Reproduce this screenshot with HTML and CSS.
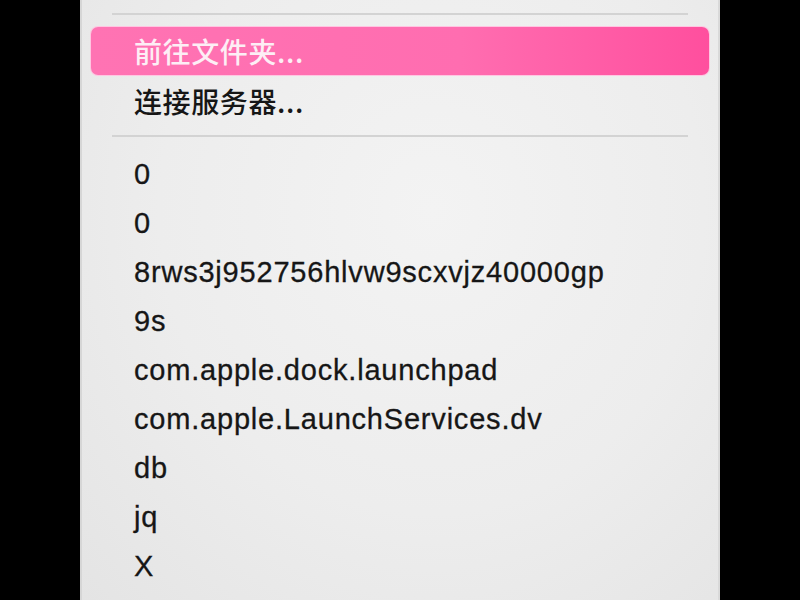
FILE: index.html
```html
<!DOCTYPE html>
<html lang="zh-CN">
<head>
<meta charset="utf-8">
<title>Menu</title>
<link rel="stylesheet" href="styles.css">
</head>
<body>
<div class="screen">
  <div class="menu">
    <div class="sep sep-top"></div>
    <div class="item item-cjk active">前往文件夹...</div>
    <div class="item item-cjk item-second">连接服务器...</div>
    <div class="sep sep-mid"></div>
    <div class="item">0</div>
    <div class="item">0</div>
    <div class="item">8rws3j952756hlvw9scxvjz40000gp</div>
    <div class="item">9s</div>
    <div class="item">com.apple.dock.launchpad</div>
    <div class="item">com.apple.LaunchServices.dv</div>
    <div class="item">db</div>
    <div class="item">jq</div>
    <div class="item">X</div>
  </div>
</div>
</body>
</html>
```

FILE: styles.css
```css
html, body {
  margin: 0;
  padding: 0;
  background: #000;
  width: 800px;
  height: 600px;
  overflow: hidden;
}

.screen {
  display: flex;
  justify-content: center;
  width: 800px;
  height: 600px;
}

.menu {
  width: 636px;
  height: 600px;
  overflow: hidden;
  background: radial-gradient(ellipse at 55% 35%, #f3f3f3 0%, #ededed 55%, #e4e4e4 100%);
  border-left: 2px solid #d6d6d6;
  border-right: 2px solid #d9d9d9;
  display: flex;
  flex-direction: column;
  font-family: "Liberation Sans", Arial, "Noto Sans CJK SC", sans-serif;
  color: #161616;
}

.sep {
  flex: none;
  height: 0;
  border-top: 2px solid #d3d3d3;
  margin-left: 30px;
  margin-right: 30px;
}

.sep-top {
  margin-top: 13px;
  margin-bottom: 12px;
}

.sep-mid {
  margin-top: 8px;
  margin-bottom: 13px;
}

.item {
  flex: none;
  height: 49px;
  line-height: 49px;
  padding-left: 52px;
  font-size: 29px;
  letter-spacing: 0.8px;
  white-space: nowrap;
  -webkit-text-stroke: 0.3px #161616;
}

.item-cjk {
  font-family: "Noto Sans CJK SC", sans-serif;
  font-size: 28px;
  font-weight: 500;
  letter-spacing: 0.6px;
  height: 48px;
  line-height: 48px;
  -webkit-text-stroke: 0;
}

.item-second {
  height: 52px;
  line-height: 52px;
}

.active {
  margin-left: 9px;
  margin-right: 9px;
  padding-left: 43px;
  border-radius: 7px;
  background: linear-gradient(90deg, #ff73b3 0%, #ff6db0 60%, #ff4f9e 100%);
  box-shadow: 0 0 0 1px #ffc6e1;
  color: #fdeef5;
}
```
